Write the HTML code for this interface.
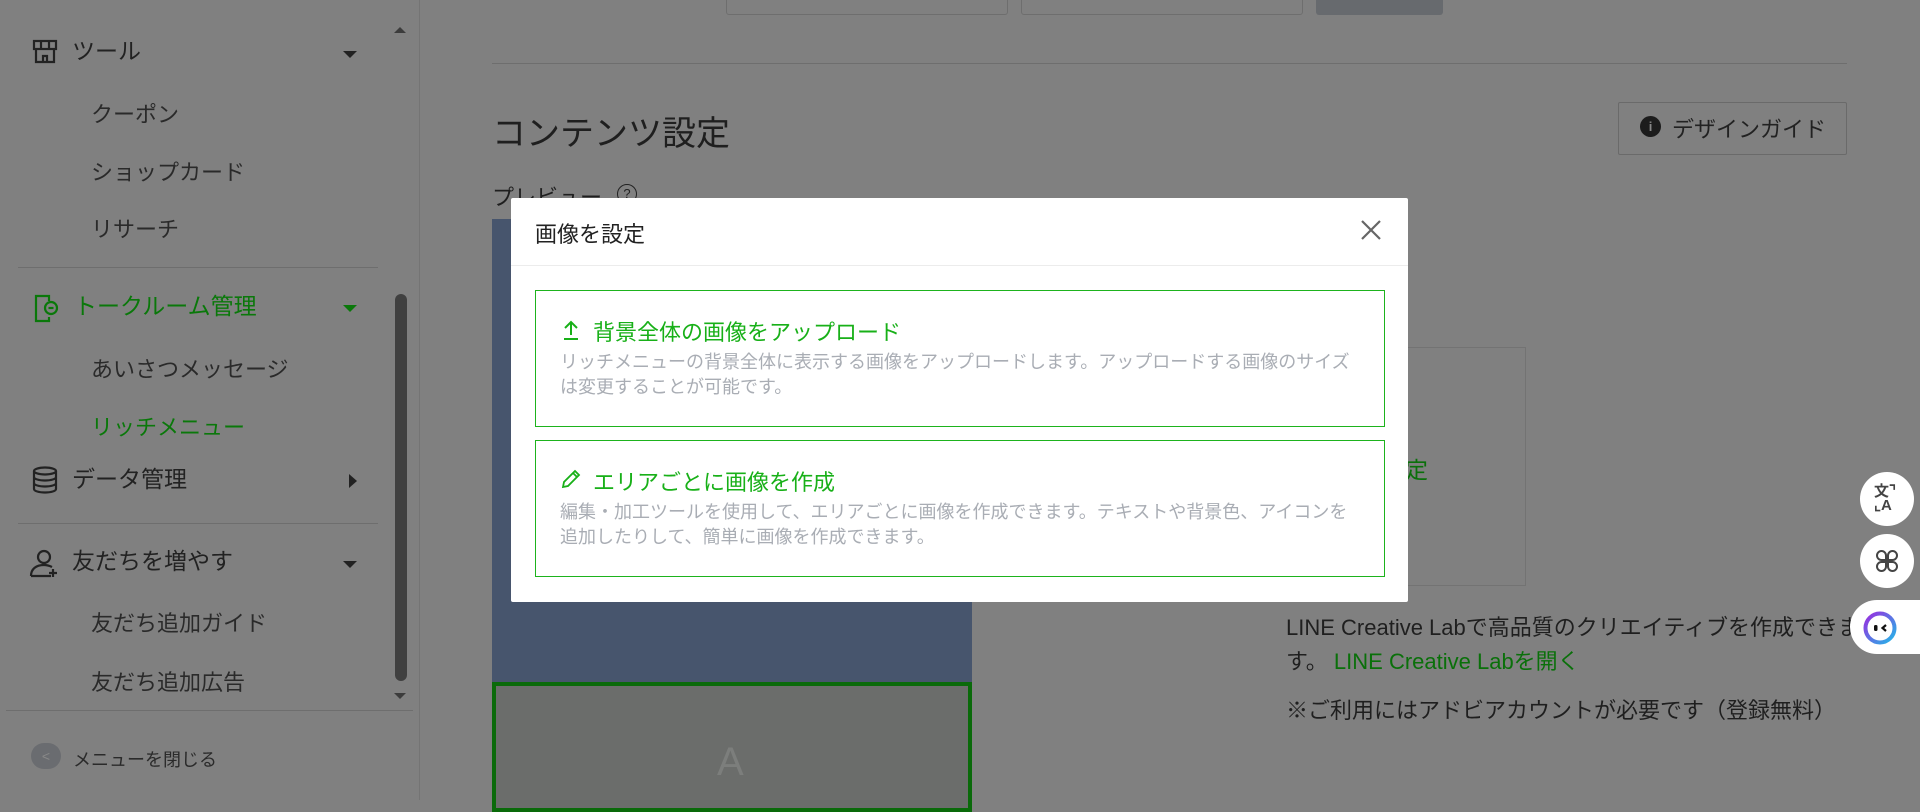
<!DOCTYPE html>
<html><head><meta charset="utf-8"><style>
*{margin:0;padding:0;box-sizing:border-box}
body{width:1920px;height:800px;overflow:hidden;background:#808080;font-family:"Liberation Sans","Noto Sans CJK JP",sans-serif;position:relative;color:#1f1f1f}
.a{position:absolute;white-space:nowrap}
.s{font-size:23px;line-height:1}
.g{color:#0a780a}
.sub{left:91px;font-size:22px;color:#2a2a2a}
.car{width:0;height:0;border-left:7px solid transparent;border-right:7px solid transparent;border-top:7px solid #222}
.d{height:1px;background:#6e6e6e}
.desc{font-size:18px;color:#a9adb4;line-height:25px}
.opt{border:1px solid #1db31d;position:absolute;left:24px;width:850px}
.ot{color:#18b018;font-size:21px;position:absolute;left:57px;top:24px}
.circ{position:absolute;left:1860px;width:54px;height:54px;border-radius:50%;background:#fff}
</style></head><body>
<!-- sidebar -->
<div class="a" style="left:419px;top:0;width:1px;height:800px;background:#747474"></div>
<svg class="a" style="left:32px;top:38px" width="26" height="26" viewBox="0 0 26 26" fill="none" stroke="#222" stroke-width="2.2"><rect x="2" y="3" width="22" height="8"/><path d="M9 3v8M17 3v8M4 11v13h18V11M11 24v-6h4v6"/></svg>
<div class="a s" style="left:72px;top:40px;color:#222">ツール</div>
<div class="a car" style="left:343px;top:51px"></div>
<div class="a sub" style="top:97px">クーポン</div>
<div class="a sub" style="top:155px">ショップカード</div>
<div class="a sub" style="top:212px">リサーチ</div>
<div class="a d" style="left:18px;top:267px;width:360px"></div>
<svg class="a" style="left:33px;top:293px" width="26" height="30" viewBox="0 0 26 30" fill="none" stroke="#0a780a" stroke-width="2.2"><path d="M16 8V3H3v25h13v-4"/><circle cx="18" cy="15" r="6"/><path d="M15.5 15h5"/></svg>
<div class="a s g" style="left:74px;top:295px">トークルーム管理</div>
<div class="a car" style="left:343px;top:305px;border-top-color:#0a780a"></div>
<div class="a sub" style="top:352px">あいさつメッセージ</div>
<div class="a sub g" style="top:410px;color:#0a780a">リッチメニュー</div>
<svg class="a" style="left:32px;top:466px" width="26" height="28" viewBox="0 0 26 28" fill="none" stroke="#222" stroke-width="2.2"><ellipse cx="13" cy="5" rx="11" ry="3.5"/><path d="M2 5v18c0 2 5 3.5 11 3.5s11-1.5 11-3.5V5M2 11c0 2 5 3.5 11 3.5s11-1.5 11-3.5M2 17c0 2 5 3.5 11 3.5s11-1.5 11-3.5"/></svg>
<div class="a s" style="left:72px;top:468px;color:#222">データ管理</div>
<div class="a" style="left:349px;top:474px;width:0;height:0;border-top:7px solid transparent;border-bottom:7px solid transparent;border-left:8px solid #222"></div>
<div class="a d" style="left:18px;top:523px;width:360px"></div>
<svg class="a" style="left:29px;top:548px" width="32" height="30" viewBox="0 0 32 30" fill="none" stroke="#222" stroke-width="2.2"><circle cx="15" cy="9" r="6"/><path d="M2 28c0-7 5-11 13-11 4 0 6 1 8 2M2 28h20M24 21v8M20 25h8"/></svg>
<div class="a s" style="left:72px;top:550px;color:#222">友だちを増やす</div>
<div class="a car" style="left:343px;top:561px"></div>
<div class="a sub" style="top:606px">友だち追加ガイド</div>
<div class="a sub" style="top:665px">友だち追加広告</div>
<div class="a d" style="left:6px;top:710px;width:407px"></div>
<div class="a" style="left:31px;top:743px;width:30px;height:26px;border-radius:13px;background:#6a6c70;color:#888;font-size:14px;text-align:center;line-height:26px">&lt;</div>
<div class="a" style="left:73px;top:746px;font-size:18px;color:#2a2a2a">メニューを閉じる</div>
<div class="a" style="left:394px;top:27px;width:0;height:0;border-left:6px solid transparent;border-right:6px solid transparent;border-bottom:6px solid #3c3c3c"></div>
<div class="a" style="left:395px;top:294px;width:12px;height:387px;border-radius:6px;background:#404040"></div>
<div class="a" style="left:394px;top:693px;width:0;height:0;border-left:6px solid transparent;border-right:6px solid transparent;border-top:6px solid #3c3c3c"></div>
<!-- main -->
<div class="a" style="left:726px;top:-4px;width:282px;height:19px;border:1px solid #6e6e6e;border-radius:3px"></div>
<div class="a" style="left:1021px;top:-4px;width:282px;height:19px;border:1px solid #6e6e6e;border-radius:3px"></div>
<div class="a" style="left:1316px;top:-4px;width:127px;height:19px;background:#676a6e;border-radius:3px"></div>
<div class="a d" style="left:492px;top:63px;width:1355px"></div>
<div class="a" style="left:492px;top:106px;font-size:34px;color:#1f1f1f">コンテンツ設定</div>
<div class="a" style="left:1618px;top:102px;width:229px;height:53px;border:1px solid #6a6a6a;border-radius:2px"></div>
<div class="a" style="left:1640px;top:116px;width:21px;height:21px;border-radius:50%;background:#1c1c1c;color:#888;font-size:13px;text-align:center;line-height:21px;font-weight:bold">i</div>
<div class="a" style="left:1672px;top:112px;font-size:22px;color:#222">デザインガイド</div>
<div class="a" style="left:492px;top:180px;font-size:22px;color:#1f1f1f">プレビュー</div>
<div class="a" style="left:617px;top:184px;width:20px;height:20px;border:1.5px solid #222;border-radius:50%;font-size:13px;text-align:center;line-height:17px;color:#222">?</div>
<div class="a" style="left:492px;top:219px;width:480px;height:463px;background:#47556d"></div>
<div class="a" style="left:492px;top:682px;width:480px;height:130px;background:#6b6d6b;border:4px solid #0a6a0a"></div>
<div class="a" style="left:717px;top:740px;font-size:40px;color:#7c7e7c">A</div>
<div class="a" style="left:1245px;top:347px;width:281px;height:239px;border:1px solid #737373"></div>
<div class="a" style="left:1382px;top:451px;font-size:23px;color:#0a700a">設定</div>
<div class="a" style="left:1286px;top:610px;font-size:22px;color:#1f1f1f">LINE Creative Labで高品質のクリエイティブを作成できます</div>
<div class="a" style="left:1286px;top:644px;font-size:22px;color:#1f1f1f">す。 <span style="color:#0a700a">LINE Creative Labを開く</span></div>
<div class="a" style="left:1286px;top:693px;font-size:22px;color:#1f1f1f">※ご利用にはアドビアカウントが必要です（登録無料）</div>
<!-- floating -->
<div class="circ" style="top:472px"><div class="a" style="left:14px;top:13px;font-size:15px;font-weight:bold;color:#444;line-height:14px">文⌝<br>⌞A</div></div>
<div class="circ" style="top:534px"><svg class="a" style="left:15px;top:15px" width="24" height="24" viewBox="0 0 24 24" fill="none" stroke="#444" stroke-width="2"><path d="M11 11H6.5A4.5 4.5 0 1 1 11 6.5zM13 11h4.5A4.5 4.5 0 1 0 13 6.5zM11 13H6.5A4.5 4.5 0 1 0 11 17.5zM13 13h4.5A4.5 4.5 0 1 1 13 17.5z"/></svg></div>
<div class="a" style="left:1850px;top:600px;width:80px;height:54px;border-radius:27px 0 0 27px;background:#fff"></div>
<svg class="a" style="left:1862px;top:610px" width="36" height="36" viewBox="0 0 36 36"><defs><linearGradient id="lg" x1="0" y1="0" x2="1" y2="1"><stop offset="0" stop-color="#9b2be0"/><stop offset="1" stop-color="#22b8e8"/></linearGradient></defs><circle cx="18" cy="18" r="14.5" fill="none" stroke="url(#lg)" stroke-width="4"/><rect x="12" y="15" width="3.5" height="6" rx="1.5" fill="#111"/><path d="M24 15l-3.5 3 3.5 3" stroke="#111" stroke-width="2.2" fill="none"/></svg>
<!-- modal -->
<div class="a" style="left:511px;top:198px;width:897px;height:404px;background:#fff;border-radius:2px">
 <div class="a" style="left:24px;top:19px;font-size:22px;color:#222">画像を設定</div>
 <svg class="a" style="left:849px;top:21px" width="22" height="22" viewBox="0 0 22 22" stroke="#666" stroke-width="2.2"><path d="M2 2l18 18M20 2L2 20"/></svg>
 <div class="a" style="left:0;top:67px;width:897px;height:1px;background:#ececec"></div>
 <div class="opt" style="top:92px;height:137px">
  <svg class="a" style="left:26px;top:28px" width="18" height="22" viewBox="0 0 18 22" fill="none" stroke="#18b018" stroke-width="2"><path d="M9 16V3M3 9l6-6 6 6M2 20h14"/></svg>
  <div class="ot" style="font-size:22px">背景全体の画像をアップロード</div>
  <div class="a desc" style="left:24px;top:59px;white-space:normal;width:800px">リッチメニューの背景全体に表示する画像をアップロードします。アップロードする画像のサイズは変更することが可能です。</div>
 </div>
 <div class="opt" style="top:242px;height:137px">
  <svg class="a" style="left:24px;top:27px" width="22" height="22" viewBox="0 0 22 22" fill="none" stroke="#18b018" stroke-width="1.8"><path d="M3 19l1-5L15 3l4 4L8 18zM13 5l4 4"/></svg>
  <div class="ot" style="font-size:22px">エリアごとに画像を作成</div>
  <div class="a desc" style="left:24px;top:59px;white-space:normal;width:800px">編集・加工ツールを使用して、エリアごとに画像を作成できます。テキストや背景色、アイコンを追加したりして、簡単に画像を作成できます。</div>
 </div>
</div>
</body></html>
